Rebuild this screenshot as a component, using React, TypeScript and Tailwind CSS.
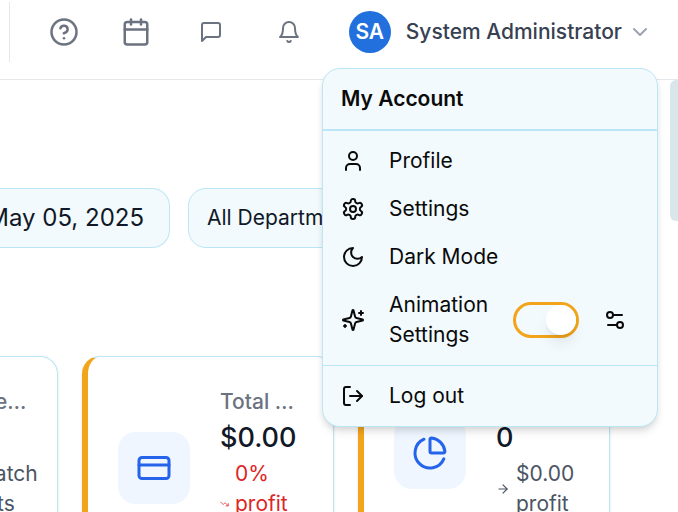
import React from "react";
import {
  ArrowRight,
  Calendar,
  ChevronDown,
  CircleHelp,
  CreditCard,
  LogOut,
  PieChart,
  Settings2,
  TrendingDown,
  User,
} from "lucide-react";

function StrokeIcon({ paths, children }: { paths: string[]; children?: React.ReactNode }) {
  return (
    <svg className="size-6 shrink-0" viewBox="0 0 24 24" fill="none" stroke="currentColor" strokeWidth="2" strokeLinecap="round" strokeLinejoin="round" aria-hidden="true">
      {paths.map((d) => (
        <path key={d} d={d} />
      ))}
      {children}
    </svg>
  );
}

const MESSAGE = ["M21 15a2 2 0 0 1-2 2H7l-4 4V5a2 2 0 0 1 2-2h14a2 2 0 0 1 2 2z"];
const BELL = ["M6 8a6 6 0 0 1 12 0c0 7 3 9 3 9H3s3-2 3-9", "M10.3 21a1.94 1.94 0 0 0 3.4 0"];
const MOON = ["M12 3a6 6 0 0 0 9 9 9 9 0 1 1-9-9Z"];
const SPARKLES = [
  "M9.937 15.5A2 2 0 0 0 8.5 14.063l-6.135-1.582a.5.5 0 0 1 0-.962L8.5 9.936A2 2 0 0 0 9.937 8.5l1.582-6.135a.5.5 0 0 1 .963 0L14.063 8.5A2 2 0 0 0 15.5 9.937l6.135 1.581a.5.5 0 0 1 0 .964L15.5 14.063a2 2 0 0 0-1.437 1.437l-1.582 6.135a.5.5 0 0 1-.963 0z",
  "M20 3v4",
  "M22 5h-4",
  "M4 17v2",
  "M5 18H3",
];
const GEAR = [
  "M12.22 2h-.44a2 2 0 0 0-2 2v.18a2 2 0 0 1-1 1.73l-.43.25a2 2 0 0 1-2 0l-.15-.08a2 2 0 0 0-2.73.73l-.22.38a2 2 0 0 0 .73 2.73l.15.1a2 2 0 0 1 1 1.72v.51a2 2 0 0 1-1 1.74l-.15.09a2 2 0 0 0-.73 2.73l.22.38a2 2 0 0 0 2.73.73l.15-.08a2 2 0 0 1 2 0l.43.25a2 2 0 0 1 1 1.73V20a2 2 0 0 0 2 2h.44a2 2 0 0 0 2-2v-.18a2 2 0 0 1 1-1.73l.43-.25a2 2 0 0 1 2 0l.15.08a2 2 0 0 0 2.73-.73l.22-.39a2 2 0 0 0-.73-2.73l-.15-.08a2 2 0 0 1-1-1.74v-.5a2 2 0 0 1 1-1.74l.15-.09a2 2 0 0 0 .73-2.73l-.22-.38a2 2 0 0 0-2.73-.73l-.15.08a2 2 0 0 1-2 0l-.43-.25a2 2 0 0 1-1-1.73V4a2 2 0 0 0-2-2z",
];

function HeaderButton({ label, children }: { label: string; children: React.ReactNode }) {
  return (
    <button type="button" aria-label={label} className="flex size-12 items-center justify-center text-[#6b7280]">
      {children}
    </button>
  );
}

function Header() {
  return (
    <header className="flex h-20 items-start justify-end border-b border-[#e5e7eb] pt-0.5 pr-[26px]">
      <div className="flex h-15 items-center">
        <div className="mr-[30px] h-15 w-px bg-[#e5e7eb]" />
        <div className="flex items-center gap-6">
          <HeaderButton label="Help"><CircleHelp className="size-[30px]" /></HeaderButton>
          <HeaderButton label="Calendar"><Calendar className="size-[30px]" /></HeaderButton>
        </div>
        <div className="ml-[27px] flex items-center gap-[30px]">
          <HeaderButton label="Messages"><StrokeIcon paths={MESSAGE} /></HeaderButton>
          <HeaderButton label="Notifications"><StrokeIcon paths={BELL} /></HeaderButton>
        </div>
        <button type="button" aria-expanded="true" className="ml-9 flex items-center">
          <span className="flex size-[42px] items-center justify-center rounded-full bg-[#2170dd] text-[21px] font-semibold text-white">SA</span>
          <span className="ml-[15px] text-[21px] leading-[30px] font-medium whitespace-nowrap text-[#374151]">System Administrator</span>
          <ChevronDown className="ml-1.5 size-6 text-[#9ca3af]" />
        </button>
      </div>
    </header>
  );
}

function MenuItem({ icon, label }: { icon: React.ReactNode; label: string }) {
  return (
    <button type="button" role="menuitem" className="flex h-12 items-center gap-6 px-3 text-left">
      {icon}
      {label}
    </button>
  );
}

function AccountMenu() {
  return (
    <div role="menu" className="absolute top-[68px] right-5 flex w-84 flex-col rounded-[18px] border border-[#bae6f5] bg-[#f2fafd] p-1.5 text-[21px] leading-[30px] text-[#0a0a0a] shadow-[0_6px_9px_-1px_rgb(0_0_0/0.1),0_3px_6px_-2px_rgb(0_0_0/0.1)]">
      <h2 className="px-3 py-[9px] font-semibold">My Account</h2>
      <div className="-mx-1.5 my-1.5 h-0.5 bg-[#bae6f5]" />
      <MenuItem icon={<User className="size-6" />} label="Profile" />
      <MenuItem icon={<StrokeIcon paths={GEAR}><circle cx="12" cy="12" r="3" /></StrokeIcon>} label="Settings" />
      <MenuItem icon={<StrokeIcon paths={MOON} />} label="Dark Mode" />
      <div className="flex items-center gap-6 px-3 py-[9px]">
        <StrokeIcon paths={SPARKLES} />
        <div className="flex flex-1 items-center gap-3">
          <label htmlFor="animation" className="flex-1">Animation Settings</label>
          <input
            id="animation"
            type="checkbox"
            role="switch"
            defaultChecked
            className="flex h-9 w-[66px] shrink-0 appearance-none justify-end rounded-full border-3 border-[#f2a51a] before:size-[30px] before:rounded-full before:bg-white before:shadow-lg"
          />
          <button type="button" aria-label="Animation options" className="flex size-12 items-center justify-center">
            <Settings2 className="size-6" />
          </button>
        </div>
      </div>
      <div className="-mx-1.5 my-1.5 h-px bg-[#bae6f5]" />
      <MenuItem icon={<LogOut className="size-6" />} label="Log out" />
    </div>
  );
}

type CardProps = { title: string; value: string; icon: React.ReactNode; trend: React.ReactNode; tone: string; children: React.ReactNode };

function StatCard({ title, value, icon, trend, tone, children }: CardProps) {
  return (
    <article className="flex w-63 shrink-0 items-start self-stretch rounded-[18px] border border-l-6 border-[#bae6f5] border-l-[#f2a51a] bg-white p-[30px] shadow-sm">
      <div className="flex min-w-0 flex-1 items-center gap-[30px]">
        <div className="flex size-18 shrink-0 items-center justify-center rounded-[18px] bg-[#eff6ff] text-[#2563eb]">{icon}</div>
        <div className="min-w-0 flex-1 text-[21px] leading-[30px]">
          <h3 className="truncate font-medium text-[#6b7280]">{title}</h3>
          <p className="text-[27px] leading-[42px] font-medium text-[#111827]">{value}</p>
          <div className={`flex items-center gap-1.5 ${tone}`}>
            {trend}
            <span>{children}</span>
          </div>
        </div>
      </div>
    </article>
  );
}

export default function App() {
  return (
    <div className="relative flex h-screen flex-col overflow-hidden bg-white font-['Inter',sans-serif]">
      <Header />
      <div className="flex min-h-0 flex-1">
        <main className="min-w-0 flex-1 overflow-hidden pt-27">
          <div className="flex gap-[18px] text-[#111827]">
            <button type="button" className="flex h-15 w-[170px] shrink-0 items-center justify-end overflow-hidden rounded-r-[18px] border border-l-0 border-[#bae6f5] bg-[#f2fafd] pr-[25px] text-2xl whitespace-nowrap">
              May 05, 2025
            </button>
            <select aria-label="Department" className="h-15 w-72 shrink-0 appearance-none rounded-[18px] border border-[#bae6f5] bg-[#f2fafd] px-[18px] text-[21px]">
              <option>All Departments</option>
            </select>
          </div>
          <div className="mt-27 -ml-[194px] flex items-start gap-6">
            <StatCard title="Active Items" value="0" icon={<CreditCard className="size-9" />} tone="text-[#4b5563]" trend={<ArrowRight className="size-3.5 shrink-0" />}>
              <span className="whitespace-nowrap">7 batch</span> parts
            </StatCard>
            <StatCard title="Total Profit" value="$0.00" icon={<CreditCard className="size-9" />} tone="text-[#dc2626]" trend={<TrendingDown className="w-[9px] shrink-0" />}>
              0% profit margin
            </StatCard>
            <StatCard title="Total Sales" value="0" icon={<PieChart className="size-9" />} tone="text-[#4b5563]" trend={<ArrowRight className="size-3.5 shrink-0" />}>
              $0.00 profit
            </StatCard>
          </div>
        </main>
        <div className="w-2 shrink-0">
          <div className="h-[141px] rounded-l-md bg-[#d9e6ea]" />
        </div>
      </div>
      <AccountMenu />
    </div>
  );
}
